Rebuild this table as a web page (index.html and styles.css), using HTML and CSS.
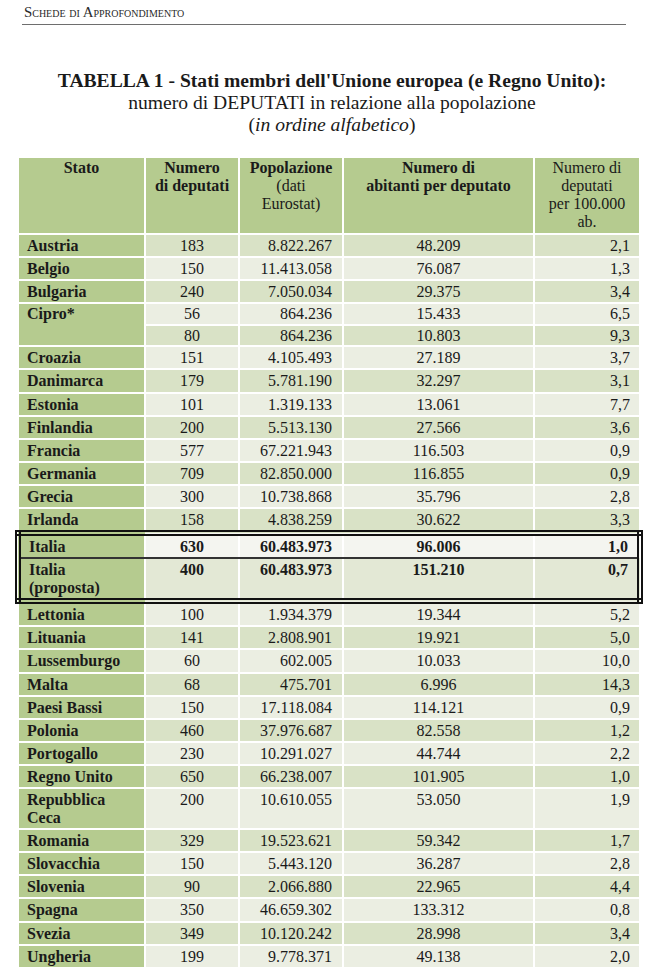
FILE: index.html
```html
<!DOCTYPE html>
<html lang="it">
<head>
<meta charset="utf-8">
<title>Tabella 1 - Deputati e popolazione</title>
<link rel="stylesheet" href="styles.css">
</head>
<body>
<div class="running-head">Schede di Approfondimento</div>
<div class="title">
  <div class="t1">TABELLA 1 - Stati membri dell'Unione europea (e Regno Unito):</div>
  <div class="t2">numero di DEPUTATI in relazione alla popolazione</div>
  <div class="t3">(<i>in ordine alfabetico</i>)</div>
</div>
<table class="data">
  <colgroup>
    <col class="c1"><col class="c2"><col class="c3"><col class="c4"><col class="c5">
  </colgroup>
  <thead>
    <tr>
      <th><b>Stato</b></th>
      <th><b>Numero<br>di deputati</b></th>
      <th><b>Popolazione</b><br>(dati<br>Eurostat)</th>
      <th><b>Numero di<br>abitanti per deputato</b></th>
      <th>Numero di<br>deputati<br>per 100.000<br>ab.</th>
    </tr>
  </thead>
  <tbody>
    <tr class="dk"><td class="st">Austria</td><td class="n">183</td><td class="p">8.822.267</td><td class="a">48.209</td><td class="r">2,1</td></tr>
    <tr class="lt"><td class="st">Belgio</td><td class="n">150</td><td class="p">11.413.058</td><td class="a">76.087</td><td class="r">1,3</td></tr>
    <tr class="dk"><td class="st">Bulgaria</td><td class="n">240</td><td class="p">7.050.034</td><td class="a">29.375</td><td class="r">3,4</td></tr>
    <tr class="lt sub"><td class="st" rowspan="2">Cipro*</td><td class="n">56</td><td class="p">864.236</td><td class="a">15.433</td><td class="r">6,5</td></tr>
    <tr class="dk sub"><td class="n">80</td><td class="p">864.236</td><td class="a">10.803</td><td class="r">9,3</td></tr>
    <tr class="lt"><td class="st">Croazia</td><td class="n">151</td><td class="p">4.105.493</td><td class="a">27.189</td><td class="r">3,7</td></tr>
    <tr class="dk"><td class="st">Danimarca</td><td class="n">179</td><td class="p">5.781.190</td><td class="a">32.297</td><td class="r">3,1</td></tr>
    <tr class="lt"><td class="st">Estonia</td><td class="n">101</td><td class="p">1.319.133</td><td class="a">13.061</td><td class="r">7,7</td></tr>
    <tr class="dk"><td class="st">Finlandia</td><td class="n">200</td><td class="p">5.513.130</td><td class="a">27.566</td><td class="r">3,6</td></tr>
    <tr class="lt"><td class="st">Francia</td><td class="n">577</td><td class="p">67.221.943</td><td class="a">116.503</td><td class="r">0,9</td></tr>
    <tr class="dk"><td class="st">Germania</td><td class="n">709</td><td class="p">82.850.000</td><td class="a">116.855</td><td class="r">0,9</td></tr>
    <tr class="lt"><td class="st">Grecia</td><td class="n">300</td><td class="p">10.738.868</td><td class="a">35.796</td><td class="r">2,8</td></tr>
    <tr class="dk"><td class="st">Irlanda</td><td class="n">158</td><td class="p">4.838.259</td><td class="a">30.622</td><td class="r">3,3</td></tr>
    <tr class="hl hl-top"><td class="st">Italia</td><td class="n">630</td><td class="p">60.483.973</td><td class="a">96.006</td><td class="r">1,0</td></tr>
    <tr class="hl hl-bot"><td class="st">Italia<br>(proposta)</td><td class="n">400</td><td class="p">60.483.973</td><td class="a">151.210</td><td class="r">0,7</td></tr>
    <tr class="lt"><td class="st">Lettonia</td><td class="n">100</td><td class="p">1.934.379</td><td class="a">19.344</td><td class="r">5,2</td></tr>
    <tr class="dk"><td class="st">Lituania</td><td class="n">141</td><td class="p">2.808.901</td><td class="a">19.921</td><td class="r">5,0</td></tr>
    <tr class="lt"><td class="st">Lussemburgo</td><td class="n">60</td><td class="p">602.005</td><td class="a">10.033</td><td class="r">10,0</td></tr>
    <tr class="dk"><td class="st">Malta</td><td class="n">68</td><td class="p">475.701</td><td class="a">6.996</td><td class="r">14,3</td></tr>
    <tr class="lt"><td class="st">Paesi Bassi</td><td class="n">150</td><td class="p">17.118.084</td><td class="a">114.121</td><td class="r">0,9</td></tr>
    <tr class="dk"><td class="st">Polonia</td><td class="n">460</td><td class="p">37.976.687</td><td class="a">82.558</td><td class="r">1,2</td></tr>
    <tr class="lt"><td class="st">Portogallo</td><td class="n">230</td><td class="p">10.291.027</td><td class="a">44.744</td><td class="r">2,2</td></tr>
    <tr class="dk"><td class="st">Regno Unito</td><td class="n">650</td><td class="p">66.238.007</td><td class="a">101.905</td><td class="r">1,0</td></tr>
    <tr class="lt"><td class="st">Repubblica<br>Ceca</td><td class="n">200</td><td class="p">10.610.055</td><td class="a">53.050</td><td class="r">1,9</td></tr>
    <tr class="dk"><td class="st">Romania</td><td class="n">329</td><td class="p">19.523.621</td><td class="a">59.342</td><td class="r">1,7</td></tr>
    <tr class="lt"><td class="st">Slovacchia</td><td class="n">150</td><td class="p">5.443.120</td><td class="a">36.287</td><td class="r">2,8</td></tr>
    <tr class="dk"><td class="st">Slovenia</td><td class="n">90</td><td class="p">2.066.880</td><td class="a">22.965</td><td class="r">4,4</td></tr>
    <tr class="lt"><td class="st">Spagna</td><td class="n">350</td><td class="p">46.659.302</td><td class="a">133.312</td><td class="r">0,8</td></tr>
    <tr class="dk"><td class="st">Svezia</td><td class="n">349</td><td class="p">10.120.242</td><td class="a">28.998</td><td class="r">3,4</td></tr>
    <tr class="lt"><td class="st">Ungheria</td><td class="n">199</td><td class="p">9.778.371</td><td class="a">49.138</td><td class="r">2,0</td></tr>
  </tbody>
</table>
</body>
</html>
```
FILE: styles.css
```css
html, body {
  margin: 0;
  padding: 0;
  background: #ffffff;
}
body {
  font-family: "Liberation Serif", "Times New Roman", serif;
  color: #1a1a1a;
}
.running-head {
  margin: 0 24px 0 22px;
  padding: 4px 0 4px 2px;
  font-size: 14.8px;
  line-height: 16px;
  font-variant: small-caps;
  border-bottom: 1px solid #6e6e6e;
  color: #2a2a2a;
}
.title {
  margin-top: 45px;
  text-align: center;
  padding-left: 14px;
  line-height: 21.8px;
}
.t1 {
  font-size: 19.6px;
  font-weight: bold;
}
.t2, .t3 {
  font-size: 19.6px;
}
.data {
  margin: 21px 0 0 15px;
  width: 622px;
  table-layout: fixed;
  border-collapse: collapse;
  font-size: 16px;
  line-height: 18px;
}
.c1 { width: 127px; }
.c2 { width: 94px; }
.c3 { width: 104px; }
.c4 { width: 191px; }
.c5 { width: 106px; }
.data th {
  background: #b5cb8f;
  border: 2px solid #ffffff;
  padding: 1px 2px 1.5px;
  font-weight: normal;
  vertical-align: top;
  text-align: center;
  white-space: nowrap;
}
.data td {
  border: 2px solid #ffffff;
  padding: 2px 9px 1.1px;
  vertical-align: top;
  white-space: nowrap;
}
.data tr.sub td { padding-top: 1px; padding-bottom: 0.6px; }
.data tr.dk td { background: #d9e2c6; }
.data tr.lt td { background: #ebeee2; }
.data td.st {
  background: #b5cb8f;
  font-weight: bold;
  padding-left: 8px;
}
.data tr.dk td.st,
.data tr.lt td.st { background: #b5cb8f; }
.data td.n { text-align: center; }
.data td.p { text-align: right; padding-right: 10px; }
.data td.a { text-align: center; }
.data td.r { text-align: right; padding-right: 9px; }

.data tr.hl td { font-weight: bold; }
.data tr.hl-top td { background: #f4f5f0; border-top: 6px double #111111; border-bottom: 2px solid #333333; }
.data tr.hl-bot td { background: #e3e8d5; border-bottom: 6px double #111111; border-top: 2px solid #333333; }
.data tr.hl td.st { background: #b5cb8f; border-left: 6px double #111111; }
.data tr.hl td.r { border-right: 6px double #111111; }
```
